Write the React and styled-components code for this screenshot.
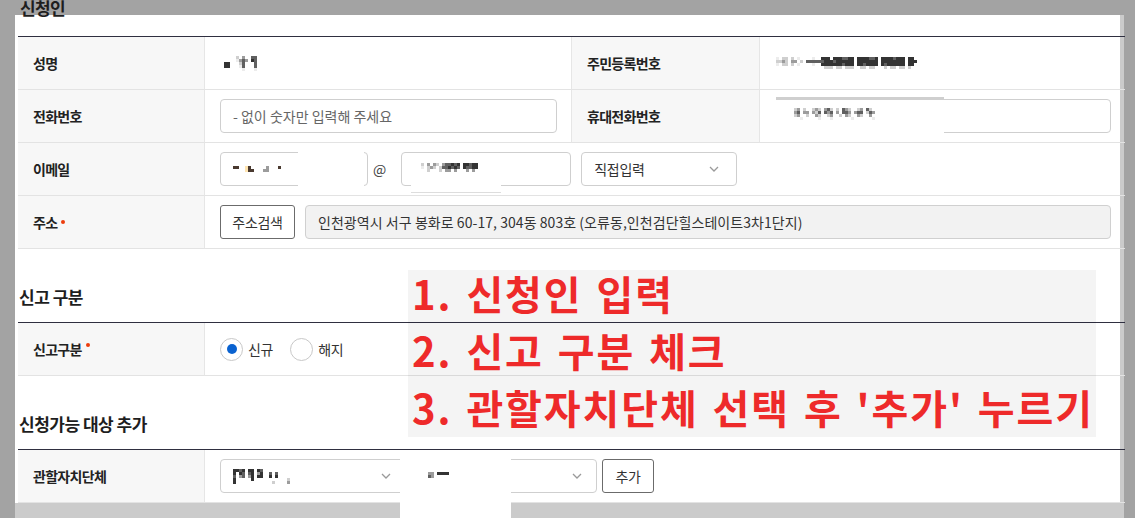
import React from 'react';
import styled, { createGlobalStyle } from 'styled-components';

const GlobalStyle = createGlobalStyle`
  html, body {
    margin: 0;
    padding: 0;
    background: #a3a3a3;
  }
  body {
    font-family: "Noto Sans CJK KR", "Noto Sans", sans-serif;
    color: #222;
  }
  * {
    box-sizing: border-box;
  }
`;

const Page = styled.div`
  width: 1135px;
  height: 518px;
  overflow: hidden;
  background: #a3a3a3;
  padding-left: 15px;
`;

const TopTitle = styled.h2`
  position: relative;
  z-index: 2;
  margin: 0;
  height: 15px;
  padding-left: 5px;
  font-size: 17px;
  line-height: 15px;
  font-weight: 700;
  letter-spacing: -0.6px;
  color: #1e1e1e;
`;

const Sheet = styled.div`
  position: relative;
  width: 1109px;
  height: 508px;
  background: #fff;
  border-right: 4px solid #cbcbcb;
  border-bottom: 20px solid #cbcbcb;
  padding: 21px 0 0 3px;
`;

const Grid = styled.div`
  display: grid;
  grid-template-columns: 187px 367px 188px 365px;
  width: 1107px;
  border-top: 1px solid #2f2f40;
`;

const Label = styled.div`
  display: flex;
  align-items: center;
  height: 53px;
  padding-left: 15px;
  background: #f7f7f7;
  border-bottom: 1px solid #e3e3e3;
  border-right: 1px solid #e6e6e6;
  font-size: 14px;
  font-weight: 700;
  letter-spacing: -0.7px;
  color: #222;
`;

const Required = styled.span`
  display: inline-block;
  width: 4px;
  height: 4px;
  margin-left: 4px;
  margin-top: ${p => (p.$raised ? '-8px' : '0')};
  border-radius: 50%;
  background: #ec3d0d;
`;

const Value = styled.div`
  position: relative;
  display: flex;
  align-items: center;
  gap: ${p => p.$gap ?? 10}px;
  height: 53px;
  padding-left: ${p => p.$pad ?? 15}px;
  grid-column: span ${p => p.$span || 1};
  border-bottom: 1px solid #e3e3e3;
  border-right: ${p => (p.$last ? 'none' : '1px solid #e6e6e6')};
`;

const SectionTitle = styled.h3`
  margin: 0;
  padding: 36px 0 13px 1px;
  line-height: 24px;
  font-size: 17px;
  font-weight: 700;
  letter-spacing: -0.5px;
  color: #1e1e1e;
`;

const TextInput = styled.input`
  width: ${p => p.$w}px;
  height: 34px;
  border: 1px solid #cfcfcf;
  border-radius: 4px;
  padding: 0 12px;
  background: #fff;
  font-family: inherit;
  font-size: 14px;
  letter-spacing: 0;
  color: #333;
  outline: none;
  &::placeholder {
    color: #666;
  }
`;

const InputBox = styled.div`
  display: flex;
  align-items: center;
  width: ${p => p.$w}px;
  height: 34px;
  border: 1px solid #cfcfcf;
  border-radius: 4px;
  padding: 0 12px;
  background: #fff;
`;

const SelectBox = styled.div`
  display: flex;
  align-items: center;
  justify-content: space-between;
  width: ${p => p.$w}px;
  height: 34px;
  border: 1px solid #cfcfcf;
  border-radius: 4px;
  padding: 0 ${p => p.$pr ?? 17}px 0 12px;
  background: #fff;
  font-size: 14px;
  letter-spacing: -0.3px;
  color: #333;
`;

const At = styled.span`
  margin: 0 5px 0 -5px;
  font-size: 14px;
  color: #444;
`;

const OutlineButton = styled.button`
  width: ${p => p.$w}px;
  height: 34px;
  padding: 0;
  border: 1px solid #6b6b6b;
  border-radius: 3px;
  background: #fff;
  font-family: inherit;
  font-size: 14px;
  letter-spacing: -0.3px;
  color: #333;
`;

const ReadonlyField = styled.div`
  display: flex;
  align-items: center;
  width: 806px;
  height: 34px;
  border: 1px solid #d0d0d0;
  border-radius: 4px;
  padding: 0 12px;
  background: #f2f2f2;
  font-size: 14px;
  letter-spacing: 0.05px;
  color: #333;
  white-space: nowrap;
`;

const RadioGroup = styled.div`
  display: flex;
  align-items: center;
  gap: 17px;
`;

const RadioLabel = styled.label`
  display: inline-flex;
  align-items: center;
  gap: 5px;
  font-size: 14px;
  letter-spacing: -0.3px;
  color: #333;
`;

const RadioDot = styled.span`
  display: flex;
  align-items: center;
  justify-content: center;
  width: 23px;
  height: 23px;
  border-radius: 50%;
  border: 1px solid #c8c8c8;
  background: #fff;
  &::after {
    content: '';
    display: ${p => (p.$on ? 'block' : 'none')};
    width: 10px;
    height: 10px;
    border-radius: 50%;
    background: #0a62d0;
  }
`;

const Patch = styled.div`
  position: absolute;
  z-index: 3;
  left: ${p => p.$left}px;
  top: ${p => p.$top}px;
  width: ${p => p.$w}px;
  height: ${p => p.$h}px;
  background: #fff;
  border-top: ${p => (p.$topLine ? `3px solid ${p.$topLine}` : 'none')};
  border-bottom: ${p => (p.$bottomLine ? `1px solid ${p.$bottomLine}` : 'none')};
  padding: ${p => p.$inset || '0'};
`;

const Annotation = styled.div`
  position: absolute;
  z-index: 4;
  left: 393px;
  top: 255px;
  width: 688px;
  height: 167px;
  background: rgba(0, 0, 0, 0.045);
  padding-left: 4px;
`;

const AnnotationText = styled.div`
  margin-top: -5px;
  font-size: 40px;
  line-height: 57px;
  font-weight: 700;
  letter-spacing: 1.9px;
  word-spacing: 3px;
  color: #ee2a2a;
  white-space: nowrap;
`;

const PixRow = styled.div`
  display: flex;
`;

const Pix = styled.span`
  width: ${p => p.$s}px;
  height: ${p => p.$s}px;
  background: ${p => p.$c};
`;

const shades = {
  '.': 'transparent',
  a: '#ececec',
  b: '#cfcfcf',
  c: '#9c9c9c',
  d: '#606060',
  e: '#333333',
  w: '#ffe4b0',
  r: '#4a3a30',
};

function Mosaic({ rows, size = 3 }) {
  return (
    <div>
      {rows.map((r, i) => (
        <PixRow key={i}>
          {[...r].map((ch, j) => (
            <Pix key={j} $s={size} $c={shades[ch]} />
          ))}
        </PixRow>
      ))}
    </div>
  );
}

function Chevron() {
  return (
    <svg width="10" height="6" viewBox="0 0 10 6" fill="none">
      <path d="M1 1l4 4 4-4" stroke="#9a9a9a" strokeWidth="1.3" />
    </svg>
  );
}

const nameRows = [
  '....b.c..dd.',
  '....acdc.ed.',
  'ee...bd...d.',
  'ee...ad...d.',
  '......a...a.',
];

const idRows = [
  'a.bb.b.a....a..eee.eeeddee.eeeedde.eeeedeee.ee..',
  'bbcb.cc.b.ddddddeeedeeeeee.eeeeeee.eeeeeeee.eee.',
  'a.bb.b.a....a..eeeeeeedeee.eedeeee.edeeeeee.ee..',
  '................bbb.bb.bbb..bb.bb...b.bb.bb.b...',
];

const phoneRows = [
  '..bc.b..bcb.cdb.b.dcb..bc.db....',
  '..cd.cc.cbd.dcd.c.ddc.cdd.bdc...',
  '..bc..b..cb..bc..b.cb..cb..c....',
  '....a.....a...a......a......a...',
];

const mail1Rows = [
  '................',
  'rr..wr.....c...r',
  '....wrr...cc....',
  '................',
];

const mail2Rows = [
  '..b.c.cb.cddede.eedee.....',
  '..a.bcb.bddeded.eddee.....',
  '....b...b.cc.c...c.c......',
];

const orgRows = [
  'eede.ee.ed............',
  'e.ed.de.ce..d.d.......',
  'd.cd.ce.ee..e.e.......',
  'e.....e...........b...',
  'e............b....c...',
];

const org2Rows = [
  'cc.eeee.',
  'dc......',
];

export default function App() {
  return (
    <>
      <GlobalStyle />
      <Page>
        <TopTitle>신청인</TopTitle>
        <Sheet>
          <Grid>
            <Label>성명</Label>
            <Value $pad={19}>
              <Mosaic rows={nameRows} />
            </Value>
            <Label>주민등록번호</Label>
            <Value $last $pad={16}>
              <Mosaic rows={idRows} />
            </Value>

            <Label>전화번호</Label>
            <Value>
              <TextInput $w={337} placeholder="- 없이 숫자만 입력해 주세요" />
            </Value>
            <Label>휴대전화번호</Label>
            <Value $last $pad={16}>
              <InputBox $w={335} />
              <Patch $left={16} $top={7} $w={168} $h={38} $topLine="#cfcfcf" $inset="8px 0 0 12px">
                <Mosaic rows={phoneRows} />
              </Patch>
            </Value>

            <Label>이메일</Label>
            <Value $span={3} $last>
              <InputBox $w={148}>
                <Mosaic rows={mail1Rows} />
              </InputBox>
              <At>@</At>
              <InputBox $w={170} />
              <SelectBox $w={156}>
                직접입력
                <Chevron />
              </SelectBox>
              <Patch $left={93} $top={8} $w={66} $h={40} />
              <Patch $left={206} $top={14} $w={90} $h={36} $bottomLine="#dddddd" $inset="6px 0 0 4px">
                <Mosaic rows={mail2Rows} />
              </Patch>
            </Value>

            <Label>
              주소<Required />
            </Label>
            <Value $span={3} $last>
              <OutlineButton $w={75}>주소검색</OutlineButton>
              <ReadonlyField>
                인천광역시 서구 봉화로 60-17, 304동 803호 (오류동,인천검단힐스테이트3차1단지)
              </ReadonlyField>
            </Value>
          </Grid>

          <SectionTitle>신고 구분</SectionTitle>
          <Grid>
            <Label>
              신고구분<Required $raised />
            </Label>
            <Value $span={3} $last>
              <RadioGroup>
                <RadioLabel>
                  <RadioDot $on />
                  신규
                </RadioLabel>
                <RadioLabel>
                  <RadioDot />
                  해지
                </RadioLabel>
              </RadioGroup>
            </Value>
          </Grid>

          <SectionTitle>신청가능 대상 추가</SectionTitle>
          <Grid>
            <Label>관할자치단체</Label>
            <Value $span={3} $last $gap={5}>
              <SelectBox $w={185} $pr={13}>
                <Mosaic rows={orgRows} />
                <Chevron />
              </SelectBox>
              <SelectBox $w={187} $pr={14}>
                <span />
                <Chevron />
              </SelectBox>
              <OutlineButton $w={52}>추가</OutlineButton>
              <Patch $left={195} $top={7} $w={111} $h={70} $inset="15px 0 0 28px">
                <Mosaic rows={org2Rows} />
              </Patch>
            </Value>
          </Grid>

          <Annotation>
            <AnnotationText>
              1. 신청인 입력
              <br />
              2. 신고 구분 체크
              <br />
              3. 관할자치단체 선택 후 '추가' 누르기
            </AnnotationText>
          </Annotation>
        </Sheet>
      </Page>
    </>
  );
}
